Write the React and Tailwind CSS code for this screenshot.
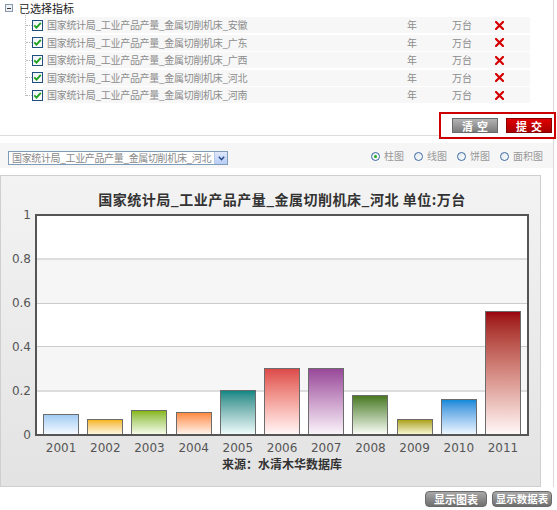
import React from "react";

const rows = ["安徽", "广东", "广西", "河北", "河南"];

const bars = [
  { y: "2001", v: 0.09, c: "bg-gradient-to-b from-[#a3ccf3] to-[#f4faff]" },
  { y: "2002", v: 0.07, c: "bg-gradient-to-b from-[#f5b700] to-[#fff6dc]" },
  { y: "2003", v: 0.11, c: "bg-gradient-to-b from-[#88b800] to-[#f6fbe8]" },
  { y: "2004", v: 0.1, c: "bg-gradient-to-b from-[#ff8a40] to-[#fff2ea]" },
  { y: "2005", v: 0.2, c: "bg-gradient-to-b from-[#068886] to-[#effcfc]" },
  { y: "2006", v: 0.3, c: "bg-gradient-to-b from-[#dc4a4a] to-[#fff6f6]" },
  { y: "2007", v: 0.3, c: "bg-gradient-to-b from-[#984899] to-[#faf4fb]" },
  { y: "2008", v: 0.18, c: "bg-gradient-to-b from-[#4a7a1e] to-[#fbfdf7]" },
  { y: "2009", v: 0.07, c: "bg-gradient-to-b from-[#ada200] to-[#f8f6cc]" },
  { y: "2010", v: 0.16, c: "bg-gradient-to-b from-[#0a89d8] to-[#eef7ff]" },
  { y: "2011", v: 0.56, c: "bg-gradient-to-b from-[#9a000f] to-[#fff8f8]" },
];

const yLabels = ["1", "0.8", "0.6", "0.4", "0.2", "0"];

function Check() {
  return (
    <div className="w-[11px] h-[11px] border border-[#1f4f7f] bg-gradient-to-br from-[#eef2f6] to-white flex items-center justify-center shrink-0">
      <svg width="9" height="9" viewBox="0 0 9 9">
        <path d="M1.3 4.4 L3.5 6.6 L7.8 1.8" fill="none" stroke="#21a121" strokeWidth="1.9" />
      </svg>
    </div>
  );
}

function Cross() {
  return (
    <svg width="9" height="9" viewBox="0 0 9 9">
      <path d="M1 1 L8 8 M8 1 L1 8" stroke="#d40000" strokeWidth="2.2" strokeLinecap="square" />
    </svg>
  );
}

function Radio({ checked, label }) {
  return (
    <div className="flex items-center gap-[4px]">
      <div className="w-[9px] h-[9px] rounded-full border border-[#3a6aa3] bg-gradient-to-br from-[#dfe7f0] to-white flex items-center justify-center">
        {checked && <div className="w-[3px] h-[3px] rounded-full bg-[#1fae1f]" />}
      </div>
      <span className="text-[10px] leading-[12px] text-[#999]">{label}</span>
    </div>
  );
}

export default function App() {
  return (
    <div className="relative w-[557px] h-[510px] bg-white overflow-hidden font-['Noto_Sans_CJK_SC',sans-serif]">
      <div className="w-[554px] border-r border-[#dadada]">
        {/* top section */}
        <div className="border-b border-[#dcdcdc]">
          <div className="h-[16px] flex items-center pl-[5px]">
            <div className="w-[8px] h-[8px] border border-[#8899ad] bg-[#eef1f5] flex items-center justify-center">
              <div className="w-[4px] h-[1px] bg-[#333]" />
            </div>
            <span className="ml-[6px] text-[11px] leading-[14px] text-[#222]">已选择指标</span>
          </div>
          <div className="relative mt-[1px] flex flex-col gap-[1.5px]">
            <div className="absolute left-[25px] top-[-4px] h-[83px] border-l border-dotted border-[#bdbdbd]" />
            {rows.map((r) => (
              <div key={r} className="h-[16px] flex items-center">
                <div className="w-[26px]" />
                <div className="w-[6px] border-t border-dotted border-[#bdbdbd]" />
                <Check />
                <div className="w-[487px] h-full bg-[#f7f7f7] flex items-center text-[10px] leading-[12px] text-[#8c8c8c]">
                  <span className="w-[364px] pl-[4px] whitespace-nowrap tracking-[-0.3px]">国家统计局_工业产品产量_金属切削机床_{r}</span>
                  <span className="w-[45px]">年</span>
                  <span className="w-[43px]">万台</span>
                  <Cross />
                </div>
              </div>
            ))}
          </div>
          <div className="mt-[9px] flex justify-end mr-[-3px] mb-[-4px]">
            <div className="relative w-[117px] h-[27px] border-2 border-[#cc0000] bg-white flex items-center pl-[11px] gap-[8px]">
              <div className="w-[46px] h-[15px] border border-[#6a6a6a] bg-gradient-to-b from-[#b4b4b4] to-[#7c7c7c] flex items-center justify-center text-[11px] leading-[12px] font-bold text-white tracking-[4px] pl-[4px]">
                清空
              </div>
              <div className="w-[46px] h-[15px] border border-[#8a0000] bg-gradient-to-b from-[#e00000] to-[#a80000] flex items-center justify-center text-[11px] leading-[12px] font-bold text-white tracking-[4px] pl-[4px]">
                提交
              </div>
            </div>
          </div>
        </div>

        {/* control bar */}
        <div className="mt-[7px] h-[25px] bg-[#f6f6f6] flex items-start justify-between pl-[8px] pr-[10px]">
          <div className="mt-[8px] w-[220px] h-[14px] border border-[#7f9db9] bg-white flex items-center">
            <span className="flex-1 pl-[3px] text-[10px] leading-[12px] text-[#888] whitespace-nowrap tracking-[-0.35px]">
              国家统计局_工业产品产量_金属切削机床_河北
            </span>
            <div className="w-[13px] h-[12px] bg-gradient-to-b from-[#dfe8fb] to-[#b8cdf5] border-l border-[#b8c8e8] flex items-center justify-center shrink-0">
              <svg width="7" height="5" viewBox="0 0 7 5">
                <path d="M0.8 0.8 L3.5 3.6 L6.2 0.8" fill="none" stroke="#2e4f8f" strokeWidth="1.5" />
              </svg>
            </div>
          </div>
          <div className="mt-[7px] flex items-center gap-[10px]">
            <Radio checked label="柱图" />
            <Radio label="线图" />
            <Radio label="饼图" />
            <Radio label="面积图" />
          </div>
        </div>

        {/* chart panel */}
        <div className="mt-[7px] w-[541px] h-[312px] border border-[#cfcfcf] bg-gradient-to-b from-[#f3f3f3] to-[#e3e3e3] flex pt-[15px]">
          <div className="w-[34px] mt-[17px] h-[234px] flex flex-col justify-between pr-[4px] font-['DejaVu_Sans',sans-serif] text-[12px] leading-[14px] text-[#555] text-right">
            {yLabels.map((l) => (
              <span key={l}>{l}</span>
            ))}
          </div>
          <div className="w-[494px] flex flex-col">
            <div className="h-[16px] text-center text-[14px] leading-[16px] font-bold text-[#333] tracking-[0.5px] whitespace-nowrap">
              国家统计局_工业产品产量_金属切削机床_河北 单位:万台
            </div>
            <div className="relative mt-[7px] h-[222px] border-2 border-[#555] bg-white">
              <div className="absolute inset-0 flex flex-col">
                <div className="flex-1 bg-white" />
                <div className="flex-1 bg-[#f6f6f6] border-t-2 border-[#dddddd]" />
                <div className="flex-1 bg-white border-t border-[#cccccc]" />
                <div className="flex-1 bg-[#f6f6f6] border-t border-[#cccccc]" />
                <div className="flex-1 bg-white border-t-2 border-[#dddddd]" />
              </div>
              <div className="relative h-full flex items-end px-[2px]">
                {bars.map((b) => (
                  <div key={b.y} className="flex-1 flex justify-center items-end h-full">
                    <div
                      className={`w-[36px] border-[1.5px] border-b-0 border-[#6c6c6c] ${b.c}`}
                      style={{ height: Math.round(b.v * 219) + "px" }}
                    />
                  </div>
                ))}
              </div>
            </div>
            <div className="mt-[5px] flex px-[4px] font-['DejaVu_Sans',sans-serif] text-[12px] leading-[14px] text-[#555]">
              {bars.map((b) => (
                <span key={b.y} className="flex-1 text-center">
                  {b.y}
                </span>
              ))}
            </div>
            <div className="mt-[2px] text-center text-[12px] leading-[14px] font-bold text-[#333]">
              来源：水清木华数据库
            </div>
          </div>
        </div>
      </div>

      {/* bottom buttons */}
      <div className="mt-[4px] flex justify-end gap-[5px] pr-[5px]">
        <div className="w-[62px] h-[16px] rounded-[4px] border border-[#6a6a6a] bg-gradient-to-b from-[#a8a8a8] to-[#6f6f6f] flex items-center justify-center text-[11px] leading-[12px] font-bold text-white">
          显示图表
        </div>
        <div className="w-[60px] h-[16px] rounded-[4px] border border-[#6a6a6a] bg-gradient-to-b from-[#a8a8a8] to-[#6f6f6f] flex items-center justify-center text-[10.5px] leading-[12px] font-bold text-white whitespace-nowrap">
          显示数据表
        </div>
      </div>
    </div>
  );
}
